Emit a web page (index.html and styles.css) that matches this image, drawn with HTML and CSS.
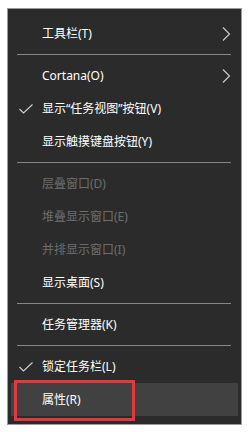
FILE: index.html
```html
<!DOCTYPE html>
<html lang="zh-CN">
<head>
<meta charset="utf-8">
<link rel="stylesheet" href="styles.css">
</head>
<body>
<div class="menu">
  <div class="item">
    <span class="label">工具栏(T)</span>
    <svg class="chev" width="9" height="14" viewBox="0 0 9 14"><polyline points="1,0.5 7.5,7 1,13.5" fill="none" stroke="#cfcfcf" stroke-width="1.1"/></svg>
  </div>
  <div class="sep"></div>
  <div class="item">
    <span class="label">Cortana(O)</span>
    <svg class="chev" width="9" height="14" viewBox="0 0 9 14"><polyline points="1,0.5 7.5,7 1,13.5" fill="none" stroke="#cfcfcf" stroke-width="1.1"/></svg>
  </div>
  <div class="item">
    <svg class="check" width="14" height="10" viewBox="0 0 14 10"><polyline points="0.5,5 4.5,9 13.5,0.5" fill="none" stroke="#cfcfcf" stroke-width="1.1"/></svg>
    <span class="label">显示“任务视图”按钮(V)</span>
  </div>
  <div class="item">
    <span class="label">显示触摸键盘按钮(Y)</span>
  </div>
  <div class="sep"></div>
  <div class="item disabled"><span class="label">层叠窗口(D)</span></div>
  <div class="item disabled"><span class="label">堆叠显示窗口(E)</span></div>
  <div class="item disabled"><span class="label">并排显示窗口(I)</span></div>
  <div class="item"><span class="label">显示桌面(S)</span></div>
  <div class="sep"></div>
  <div class="item"><span class="label">任务管理器(K)</span></div>
  <div class="sep"></div>
  <div class="item">
    <svg class="check" width="14" height="10" viewBox="0 0 14 10"><polyline points="0.5,5 4.5,9 13.5,0.5" fill="none" stroke="#cfcfcf" stroke-width="1.1"/></svg>
    <span class="label">锁定任务栏(L)</span>
  </div>
  <div class="item hover">
    <span class="label">属性(R)</span>
    <div class="highlight"></div>
  </div>
</div>
</body>
</html>
```

FILE: styles.css
```css
html, body {
  margin: 0;
  padding: 0;
  background: #ffffff;
}

body {
  padding: 8px 0 0 7px;
  font-family: "Noto Sans", "Noto Sans CJK SC", sans-serif;
  font-size: 12px;
}

.menu {
  width: 235px;
  box-sizing: border-box;
  background: #2b2b2b;
  border: 1px solid #9a9a9a;
  padding: 8px 3px;
  display: flex;
  flex-direction: column;
}

.item {
  position: relative;
  height: 33px;
  display: flex;
  align-items: center;
  padding-left: 31px;
  padding-right: 7px;
  color: #ffffff;
}

.label {
  line-height: 16px;
  white-space: nowrap;
  flex: 1;
}

.disabled {
  color: #6d6d6d;
}

.hover {
  background: #414141;
}

.chev {
  display: block;
}

.check {
  position: absolute;
  left: 8px;
  top: 12px;
}

.sep {
  height: 1px;
  background: #858585;
  margin: 4px 7px 4px 6px;
}

.highlight {
  position: absolute;
  left: 3px;
  top: -3px;
  width: 121px;
  height: 41px;
  box-sizing: border-box;
  border: 3px solid #e13a3e;
}
```
